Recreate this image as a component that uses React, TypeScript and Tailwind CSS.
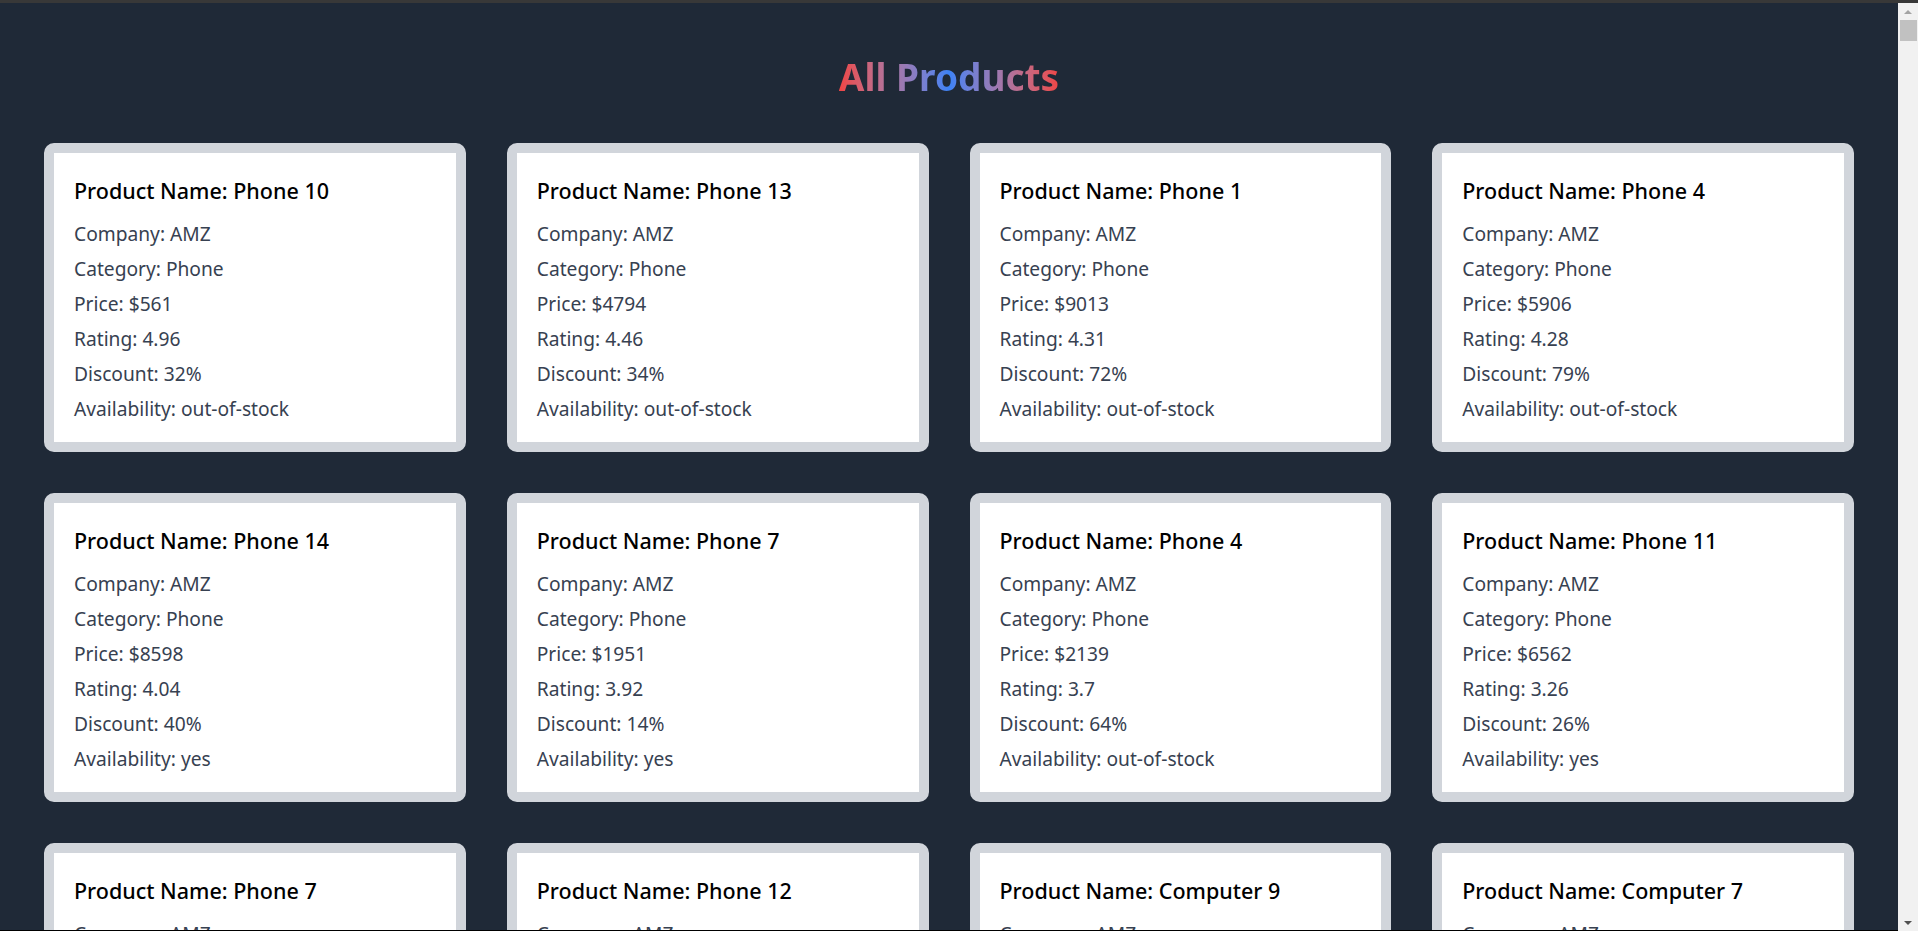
import React from "react";

type P = { name: string; price: number; rating: number; discount: number; avail: string; category: string };

const products: P[] = [
  { name: "Phone 10", category: "Phone", price: 561, rating: 4.96, discount: 32, avail: "out-of-stock" },
  { name: "Phone 13", category: "Phone", price: 4794, rating: 4.46, discount: 34, avail: "out-of-stock" },
  { name: "Phone 1", category: "Phone", price: 9013, rating: 4.31, discount: 72, avail: "out-of-stock" },
  { name: "Phone 4", category: "Phone", price: 5906, rating: 4.28, discount: 79, avail: "out-of-stock" },
  { name: "Phone 14", category: "Phone", price: 8598, rating: 4.04, discount: 40, avail: "yes" },
  { name: "Phone 7", category: "Phone", price: 1951, rating: 3.92, discount: 14, avail: "yes" },
  { name: "Phone 4", category: "Phone", price: 2139, rating: 3.7, discount: 64, avail: "out-of-stock" },
  { name: "Phone 11", category: "Phone", price: 6562, rating: 3.26, discount: 26, avail: "yes" },
  { name: "Phone 7", category: "Phone", price: 1209, rating: 3.1, discount: 12, avail: "yes" },
  { name: "Phone 12", category: "Phone", price: 3421, rating: 2.98, discount: 45, avail: "yes" },
  { name: "Computer 9", category: "Computer", price: 7840, rating: 2.9, discount: 18, avail: "yes" },
  { name: "Computer 7", category: "Computer", price: 6123, rating: 2.75, discount: 51, avail: "out-of-stock" },
];

function Card({ p }: { p: P }) {
  return (
    <div className="border-[10px] border-[#d1d5db] rounded-[10px] bg-white px-[20px] pt-[20px] pb-[18px]">
      <h2 className="text-[21.5px] leading-[35px] font-medium text-black mb-[11px]">Product Name: {p.name}</h2>
      <div className="text-[#374151] text-[19.2px] leading-[30px]">
        <p className="mb-[5px]">Company: AMZ</p>
        <p className="mb-[5px]">Category: {p.category}</p>
        <p className="mb-[5px]">Price: ${p.price}</p>
        <p className="mb-[5px]">Rating: {p.rating}</p>
        <p className="mb-[5px]">Discount: {p.discount}%</p>
        <p>Availability: {p.avail}</p>
      </div>
    </div>
  );
}

export default function App() {
  return (
    <div
      className="h-[931px] w-full flex flex-col overflow-hidden bg-black"
      style={{ fontFamily: '"Noto Sans", "Open Sans", sans-serif' }}
    >
      <div className="h-[3px] bg-[#383838] shrink-0" />
      <div className="flex flex-1 min-h-0">
        <main className="flex-1 min-w-0 overflow-hidden bg-[#1f2937] mb-[1px]">
          <div className="flex justify-center pt-[50px] pb-[30px]">
            <h1 className="text-[37px] leading-[48px] font-bold bg-gradient-to-r from-[#ef4444] via-[#3b82f6] to-[#ef4444] bg-clip-text text-transparent">
              All Products
            </h1>
          </div>
          <div className="grid grid-cols-4 gap-x-[41px] gap-y-[41px] px-[44px] pt-[12px]">
            {products.map((p, i) => (
              <Card key={i} p={p} />
            ))}
          </div>
        </main>
        <div className="w-[20px] shrink-0 bg-[#f1f1f1] flex flex-col items-center justify-between">
          <div className="flex flex-col items-center w-full">
            <svg width="20" height="17" viewBox="0 0 20 17">
              <polygon points="6,11 10,7 14,11" fill="#a3a3a3" />
            </svg>
            <div className="w-[17px] h-[21px] bg-[#c1c1c1] ml-[1px]" />
          </div>
          <svg width="20" height="17" viewBox="0 0 20 17">
            <polygon points="6,7 14,7 10,11" fill="#505050" />
          </svg>
        </div>
      </div>
    </div>
  );
}
